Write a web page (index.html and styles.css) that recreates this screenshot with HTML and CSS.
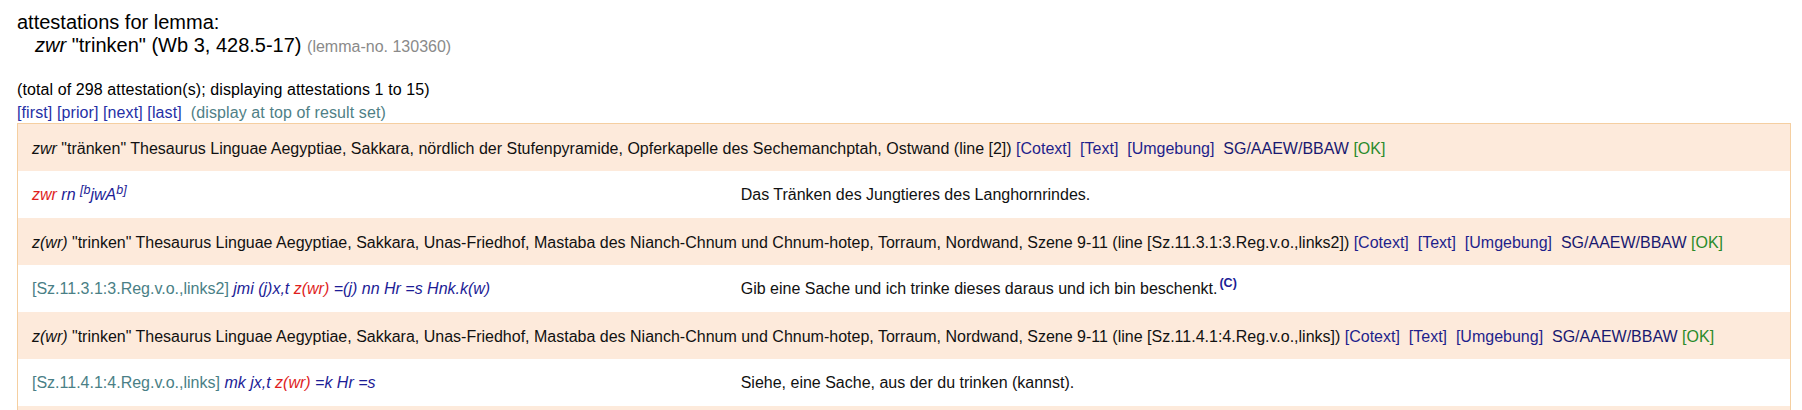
FILE: index.html
```html
<!DOCTYPE html>
<html>
<head>
<meta charset="utf-8">
<title>attestations for lemma</title>
<link rel="stylesheet" href="styles.css">
</head>
<body>
<div class="page">
  <div class="title">
    <div>attestations for lemma:</div>
    <div class="lemma"><i>zwr</i> "trinken" (Wb 3, 428.5-17) <span class="lemno">(lemma-no. 130360)</span></div>
  </div>
  <div class="info">
    <div>(total of 298 attestation(s); displaying attestations 1 to 15)</div>
    <div class="nav"><a href="#">[first]</a> <a href="#">[prior]</a> <a href="#">[next]</a> <a href="#">[last]</a>&nbsp;&nbsp;<span class="hint">(display at top of result set)</span></div>
  </div>
  <table class="results">
    <tr class="head"><td colspan="2"><i>zwr</i> "tränken" Thesaurus Linguae Aegyptiae, Sakkara, nördlich der Stufenpyramide, Opferkapelle des Sechemanchptah, Ostwand (line [2]) <a href="#">[Cotext]</a>&nbsp; <a href="#">[Text]</a>&nbsp; <a href="#">[Umgebung]</a>&nbsp; <span class="src">SG/AAEW/BBAW</span> <span class="ok">[OK]</span></td></tr>
    <tr class="line"><td class="tr"><span class="hi">zwr</span> rn <sup>[b</sup>jwA<sup>b]</sup></td><td>Das Tränken des Jungtieres des Langhornrindes.</td></tr>
    <tr class="head"><td colspan="2"><i>z(wr)</i> "trinken" Thesaurus Linguae Aegyptiae, Sakkara, Unas-Friedhof, Mastaba des Nianch-Chnum und Chnum-hotep, Torraum, Nordwand, Szene 9-11 (line [Sz.11.3.1:3.Reg.v.o.,links2]) <a href="#">[Cotext]</a>&nbsp; <a href="#">[Text]</a>&nbsp; <a href="#">[Umgebung]</a>&nbsp; <span class="src">SG/AAEW/BBAW</span> <span class="ok">[OK]</span></td></tr>
    <tr class="line"><td><span class="ref">[Sz.11.3.1:3.Reg.v.o.,links2]</span> <span class="tr">jmi (j)x,t <span class="hi">z(wr)</span> =(j) nn Hr =s Hnk.k(w)</span></td><td>Gib eine Sache und ich trinke dieses daraus und ich bin beschenkt.<sup class="note">(C)</sup></td></tr>
    <tr class="head"><td colspan="2"><i>z(wr)</i> "trinken" Thesaurus Linguae Aegyptiae, Sakkara, Unas-Friedhof, Mastaba des Nianch-Chnum und Chnum-hotep, Torraum, Nordwand, Szene 9-11 (line [Sz.11.4.1:4.Reg.v.o.,links]) <a href="#">[Cotext]</a>&nbsp; <a href="#">[Text]</a>&nbsp; <a href="#">[Umgebung]</a>&nbsp; <span class="src">SG/AAEW/BBAW</span> <span class="ok">[OK]</span></td></tr>
    <tr class="line"><td><span class="ref">[Sz.11.4.1:4.Reg.v.o.,links]</span> <span class="tr">mk jx,t <span class="hi">z(wr)</span> =k Hr =s</span></td><td>Siehe, eine Sache, aus der du trinken (kannst).</td></tr>
    <tr class="head"><td colspan="2"><i>z(wr)</i> "trinken" Thesaurus Linguae Aegyptiae, Sakkara, Unas-Friedhof, Mastaba des Nianch-Chnum und Chnum-hotep, Torraum, Nordwand, Szene 9-11 (line [Sz.11.4.1:5.Reg.v.o.,links]) <a href="#">[Cotext]</a>&nbsp; <a href="#">[Text]</a>&nbsp; <a href="#">[Umgebung]</a>&nbsp; <span class="src">SG/AAEW/BBAW</span> <span class="ok">[OK]</span></td></tr>
    <tr class="line"><td><span class="ref">[Sz.11.4.1:5.Reg.v.o.,links]</span> <span class="tr">jmi <span class="hi">z(wr)</span> =j</span></td><td>Gib, dass ich trinke.</td></tr>
  </table>
</div>
</body>
</html>
```

FILE: styles.css
```css
html, body {
  margin: 0;
  padding: 0;
  background: #ffffff;
}
body {
  font-family: "Liberation Sans", Arial, sans-serif;
  font-size: 16px;
  color: #111111;
}
.page {
  padding: 11px 0 0 17px;
}
.title {
  font-size: 20px;
  line-height: 23px;
  color: #000;
}
.title .lemma {
  padding-left: 18px;
}
.title .lemno {
  font-size: 16px;
  color: #8a8a8a;
}
.info {
  margin-top: 20px;
  line-height: 23px;
  color: #000;
  letter-spacing: 0.1px;
}
a {
  color: #1f1f8c;
  text-decoration: none;
}
.nav a {
  color: #2530a6;
}
.hint {
  color: #4f7f86;
}
.results {
  width: 1774px;
  border-collapse: collapse;
  border: 1px solid #f5cfa1;
  margin-top: -1px;
}
.results td {
  padding: 14px 14px;
  line-height: 19px;
  vertical-align: top;
}
.results tr.head td {
  background: #fdeadb;
  padding-top: 15px;
  padding-bottom: 13px;
}
.results tr.line td {
  background: #ffffff;
}
.results tr.line td:first-child {
  width: 40%;
}
.src {
  color: #191970;
}
.ok {
  color: #2a8a2a;
}
.ref {
  color: #4a7f86;
}
.tr {
  color: #1c1c96;
  font-style: italic;
}
.hi {
  color: #e01e1e;
  font-style: italic;
}
sup {
  font-size: 12.5px;
  line-height: 0;
  vertical-align: 6px;
}
sup.note {
  font-weight: bold;
  color: #1c1c96;
  margin-left: 2px;
  vertical-align: 7px;
}
```
